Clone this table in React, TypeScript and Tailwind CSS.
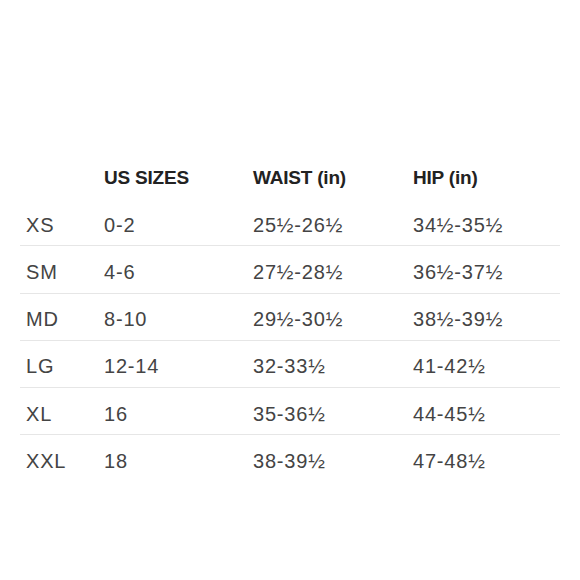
const rows: [string, string, string, string][] = [
  ['XS', '0-2', '25½-26½', '34½-35½'],
  ['SM', '4-6', '27½-28½', '36½-37½'],
  ['MD', '8-10', '29½-30½', '38½-39½'],
  ['LG', '12-14', '32-33½', '41-42½'],
  ['XL', '16', '35-36½', '44-45½'],
  ['XXL', '18', '38-39½', '47-48½'],
];

export default function App() {
  return (
    <div
      className="w-[580px] h-[580px] bg-white pt-[154px] pl-[20px]"
      style={{ fontFamily: '"Liberation Sans", Arial, sans-serif' }}
    >
      <div className="w-[540px]">
        <div className="flex items-center h-[45px] pt-[3px] text-[19px] font-bold text-[#222] tracking-[-0.2px]">
          <div className="w-[84px]" />
          <div className="w-[149px]">US SIZES</div>
          <div className="w-[160px]">WAIST (in)</div>
          <div>HIP (in)</div>
        </div>
        {rows.map((r, i) => (
          <div
            key={r[0]}
            className={`flex items-center h-[47.25px] pt-[5px] text-[20px] text-[#444] tracking-[0.8px] ${
              i < rows.length - 1 ? 'border-b border-[#e6e6e6]' : ''
            }`}
          >
            <div className="w-[84px] pl-[6px]">{r[0]}</div>
            <div className="w-[149px]">{r[1]}</div>
            <div className="w-[160px]">{r[2]}</div>
            <div>{r[3]}</div>
          </div>
        ))}
      </div>
    </div>
  );
}
